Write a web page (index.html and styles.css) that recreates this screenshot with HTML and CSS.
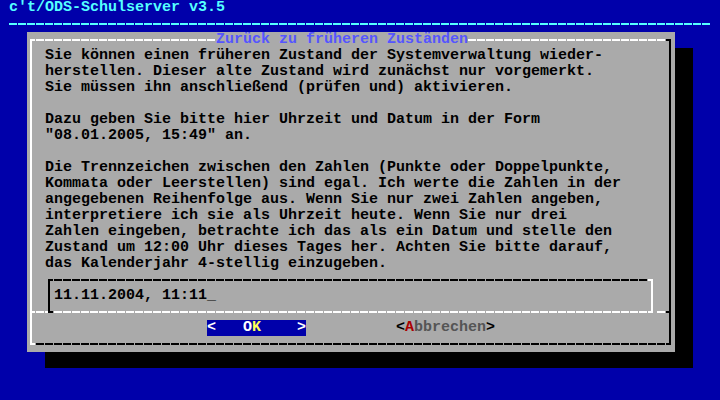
FILE: index.html
```html
<!DOCTYPE html>
<html lang="de">
<head>
<meta charset="utf-8">
<title>c't/ODS-Schulserver v3.5</title>
<link rel="stylesheet" href="styles.css">
</head>
<body>
<div class="screen">
  <div class="sys-title">c't/ODS-Schulserver v3.5</div>
  <div class="sys-rule"></div>
  <div class="dialog">
    <div class="d-head"><span class="d-title">Zurück zu früheren Zuständen</span></div>
    <div class="d-text">Sie können einen früheren Zustand der Systemverwaltung wieder-
herstellen. Dieser alte Zustand wird zunächst nur vorgemerkt.
Sie müssen ihn anschließend (prüfen und) aktivieren.

Dazu geben Sie bitte hier Uhrzeit und Datum in der Form
"08.01.2005, 15:49" an.

Die Trennzeichen zwischen den Zahlen (Punkte oder Doppelpunkte,
Kommata oder Leerstellen) sind egal. Ich werte die Zahlen in der
angegebenen Reihenfolge aus. Wenn Sie nur zwei Zahlen angeben,
interpretiere ich sie als Uhrzeit heute. Wenn Sie nur drei
Zahlen eingeben, betrachte ich das als ein Datum und stelle den
Zustand um 12:00 Uhr dieses Tages her. Achten Sie bitte darauf,
das Kalenderjahr 4-stellig einzugeben.</div>
    <div class="d-input">11.11.2004, 11:11_</div>
    <div class="d-sep"></div>
    <div class="d-buttons">
      <span class="btn-ok">&lt;   O<span class="hot-y">K</span>    &gt;</span>
      <span class="btn-cancel">&lt;<span class="hot-r">A</span><span class="dim">bbrechen</span>&gt;</span>
    </div>
    <div class="d-foot"></div>
  </div>
</div>
</body>
</html>
```

FILE: styles.css
```css
* {
  box-sizing: border-box;
}

body {
  margin: 0;
  background: #0000aa;
}

.screen {
  width: 720px;
  height: 400px;
  overflow: hidden;
  background: #0000aa;
  font-family: "Liberation Mono", "DejaVu Sans Mono", monospace;
  font-size: 15px;
  line-height: 16px;
  font-weight: bold;
  color: #000;
}

.sys-title {
  height: 16px;
  padding-left: 9px;
  color: #55ffff;
  white-space: pre;
}

.sys-rule {
  height: 16px;
  margin: 0 9px;
  background: repeating-linear-gradient(to right, #55ffff 0 8px, transparent 8px 9px) 0 7px / 100% 2px no-repeat;
}

.dialog {
  width: 648px;
  height: 320px;
  margin-left: 27px;
  display: flex;
  flex-direction: column;
  box-shadow: 18px 16px 0 #000;
  background:
    linear-gradient(#fff, #fff) 3px 7px / 2px 306px no-repeat,
    linear-gradient(#000, #000) 642px 7px / 2px 306px no-repeat,
    #aaaaaa;
}

.dialog > * {
  flex: none;
}

.d-head {
  height: 16px;
  display: flex;
  padding-left: 189px;
  background:
    linear-gradient(#fff, #fff) 3px 7px / 5px 2px no-repeat,
    repeating-linear-gradient(to right, #fff 0 8px, transparent 8px 9px) 9px 7px / 630px 2px no-repeat,
    linear-gradient(#000, #000) 639px 7px / 5px 2px no-repeat;
}

.d-title {
  color: #5555ff;
  background: #aaaaaa;
  white-space: pre;
}

.d-text {
  height: 224px;
  padding-left: 18px;
  white-space: pre;
}

.d-input {
  margin: 7px 0 0 21px;
  width: 605px;
  height: 32px;
  padding: 9px 0 0 4px;
  border-left: 2px solid #000;
  border-right: 2px solid #fff;
  white-space: pre;
  background:
    linear-gradient(#000, #000) 0 0 / 5px 2px no-repeat border-box,
    repeating-linear-gradient(to right, #000 0 8px, transparent 8px 9px) 6px 0 / 594px 2px no-repeat border-box,
    linear-gradient(#fff, #fff) 600px 0 / 3px 2px no-repeat border-box;
}

.d-sep {
  margin-left: 3px;
  width: 641px;
  height: 2px;
  background:
    linear-gradient(#000, #000) 18px 0 / 5px 2px no-repeat,
    linear-gradient(#aaaaaa, #aaaaaa) 623px 0 / 3px 2px no-repeat,
    linear-gradient(#fff, #fff) 0 0 / 5px 2px no-repeat,
    repeating-linear-gradient(to right, #fff 0 8px, transparent 8px 9px) 6px 0 / 630px 2px no-repeat,
    linear-gradient(#000, #000) 636px 0 / 5px 2px no-repeat;
}

.d-buttons {
  margin-top: 7px;
  height: 16px;
  display: flex;
  gap: 90px;
  padding-left: 180px;
  white-space: pre;
}

.btn-ok {
  background: #0000aa;
  color: #fff;
}

.hot-y {
  color: #ffff55;
}

.btn-cancel {
  color: #000;
}

.hot-r {
  color: #aa0000;
}

.dim {
  color: #555555;
}

.d-foot {
  height: 16px;
  background:
    linear-gradient(#fff, #fff) 3px 7px / 5px 2px no-repeat,
    repeating-linear-gradient(to right, #000 0 8px, transparent 8px 9px) 9px 7px / 630px 2px no-repeat,
    linear-gradient(#000, #000) 639px 7px / 5px 2px no-repeat;
}
```
